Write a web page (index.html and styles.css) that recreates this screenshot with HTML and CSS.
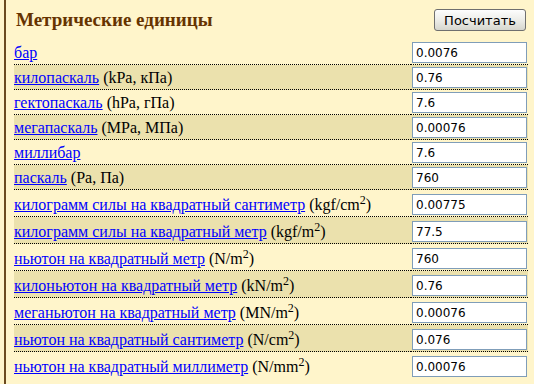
FILE: index.html
```html
<!DOCTYPE html>
<html lang="ru">
<head>
    <meta charset="UTF-8">
    <title>Метрические единицы</title>
    <link rel="stylesheet" href="styles.css">
</head>
<body>

    <div class="panel">
        <div class="header">
            <h1>Метрические единицы</h1>
            <button type="button" onclick="pereschitat()">Посчитать</button>
        </div>

        <table class="units" id="tablitsa">
            <tr><td><a href="#">бар</a></td><td class="val"><input type="text" value="0.0076"></td></tr>
            <tr><td><a href="#">килопаскаль</a> (kPa, кПа)</td><td class="val"><input type="text" value="0.76"></td></tr>
            <tr><td><a href="#">гектопаскаль</a> (hPa, гПа)</td><td class="val"><input type="text" value="7.6"></td></tr>
            <tr><td><a href="#">мегапаскаль</a> (MPa, МПа)</td><td class="val"><input type="text" value="0.00076"></td></tr>
            <tr><td><a href="#">миллибар</a></td><td class="val"><input type="text" value="7.6"></td></tr>
            <tr><td><a href="#">паскаль</a> (Pa, Па)</td><td class="val"><input type="text" value="760"></td></tr>
            <tr class="sq"><td><a href="#">килограмм силы на квадратный сантиметр</a> (kgf/cm<sup>2</sup>)</td><td class="val"><input type="text" value="0.00775"></td></tr>
            <tr class="sq"><td><a href="#">килограмм силы на квадратный метр</a> (kgf/m<sup>2</sup>)</td><td class="val"><input type="text" value="77.5"></td></tr>
            <tr class="sq"><td><a href="#">ньютон на квадратный метр</a> (N/m<sup>2</sup>)</td><td class="val"><input type="text" value="760"></td></tr>
            <tr class="sq"><td><a href="#">килоньютон на квадратный метр</a> (kN/m<sup>2</sup>)</td><td class="val"><input type="text" value="0.76"></td></tr>
            <tr class="sq"><td><a href="#">меганьютон на квадратный метр</a> (MN/m<sup>2</sup>)</td><td class="val"><input type="text" value="0.00076"></td></tr>
            <tr class="sq"><td><a href="#">ньютон на квадратный сантиметр</a> (N/cm<sup>2</sup>)</td><td class="val"><input type="text" value="0.076"></td></tr>
            <tr class="sq"><td><a href="#">ньютон на квадратный миллиметр</a> (N/mm<sup>2</sup>)</td><td class="val"><input type="text" value="0.00076"></td></tr>
        </table>
    </div>

    <script>
        function pereschitat() {
            // значения уже посчитаны для 760 Па
        }
    </script>

</body>
</html>
```

FILE: styles.css
```css
body {
    margin: 0;
    background-color: #fff5cb;
    font-family: "Liberation Serif", "Times New Roman", serif;
    font-size: 16px;
    color: #000;
}
.panel {
    margin-left: 4px;
    border-left: 2px solid #6b4a1f;
    padding: 0 6px 0 8px;
    min-height: 384px;
    box-sizing: border-box;
}
.header {
    display: flex;
    justify-content: space-between;
    align-items: center;
    height: 40px;
}
h1 {
    margin: 0 0 0 2px;
    font-size: 19px;
    font-weight: bold;
    color: #663300;
}
button {
    font-family: "DejaVu Sans", Tahoma, sans-serif;
    font-size: 13px;
    height: 22px;
    width: 92px;
    margin-right: 2px;
    padding: 0;
    border: 1px solid #6f6f6f;
    border-radius: 3px;
    background: linear-gradient(#fdfdfd, #ebebe6 55%, #d6d6ce);
    color: #000;
}
.units {
    width: 100%;
    border-collapse: collapse;
}
.units td {
    padding: 2px 0 1px;
    border-bottom: 1px dotted #000;
    line-height: 20px;
}
.units tr.sq td {
    padding-top: 4px;
}
.units tr:nth-child(even) td {
    background-color: #ebe1ad;
}
.units tr:last-child td {
    border-bottom: none;
}
.units a {
    color: #0000ff;
}
.units sup {
    font-size: 12px;
    line-height: 0;
}
.val {
    width: 117px;
}
input {
    display: block;
    width: 115px;
    height: 21px;
    box-sizing: border-box;
    margin: 0 1px 0 auto;
    padding: 1px 3px;
    border: 1px solid #7f9db9;
    background: #fff;
    font-family: "DejaVu Sans", Tahoma, sans-serif;
    font-size: 12px;
}
```
